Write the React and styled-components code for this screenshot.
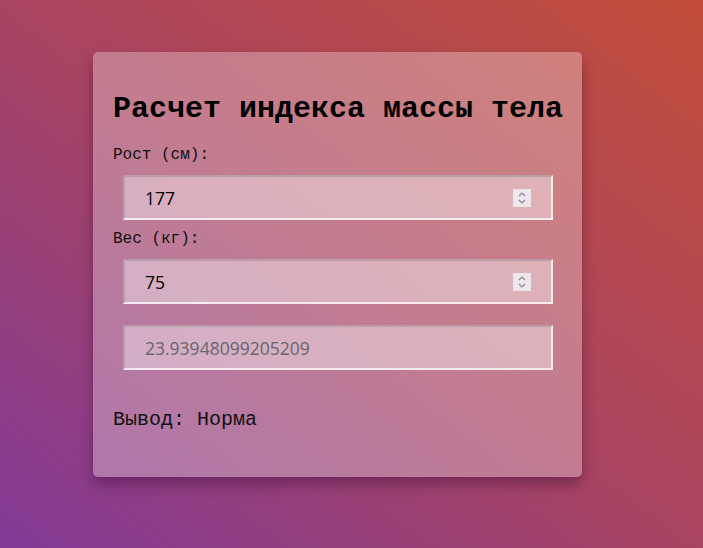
import React, { useState } from "react";
import styled, { createGlobalStyle } from "styled-components";

const GlobalStyle = createGlobalStyle`
  html, body {
    margin: 0;
    padding: 0;
  }
  body {
    font-family: "Liberation Mono", "Courier New", monospace;
  }
`;

const Page = styled.div`
  min-height: 100vh;
  box-sizing: border-box;
  padding: 52px 0 0 93px;
  background: linear-gradient(to top right, #823a97, #a94461 50%, #c24d39);
`;

const Card = styled.div`
  width: 489px;
  box-sizing: border-box;
  padding: 20px 20px 25px;
  border-radius: 5px;
  background: rgba(255, 255, 255, 0.3);
  box-shadow: 0 8px 14px rgba(40, 0, 40, 0.35);
`;

const Title = styled.h1`
  margin: 20px 0 20px;
  font-size: 30px;
  font-weight: bold;
  color: #000;
  line-height: 34px;
  white-space: nowrap;
`;

const Label = styled.label`
  display: block;
  font-size: 16px;
  line-height: 19px;
  color: #111;
`;

const Field = styled.div`
  display: flex;
  align-items: center;
  width: 430px;
  height: 45px;
  box-sizing: border-box;
  margin: ${(p) => p.$margin || "10px"};
  padding: 0 20px 0 20px;
  background: rgba(255, 255, 255, 0.4);
  border: 2px solid;
  border-color: rgba(170, 150, 160, 0.7) rgba(255, 255, 255, 0.75)
    rgba(255, 255, 255, 0.75) rgba(170, 150, 160, 0.7);
`;

const Input = styled.input`
  flex: 1;
  min-width: 0;
  border: none;
  outline: none;
  background: transparent;
  padding: 0;
  font-family: "Open Sans", "Noto Sans", sans-serif;
  font-size: 17.5px;
  color: ${(p) => (p.readOnly ? "#6a656b" : "#000")};
  -moz-appearance: textfield;
  &::-webkit-outer-spin-button,
  &::-webkit-inner-spin-button {
    -webkit-appearance: none;
    margin: 0;
  }
`;

const Spinner = styled.div`
  width: 18px;
  height: 18px;
  display: flex;
  align-items: center;
  justify-content: center;
  background: #ebe7ec;
`;

const Result = styled.p`
  margin: 38px 0 20px;
  font-size: 20px;
  line-height: 24px;
  color: #111;
`;

function SpinIcon() {
  return (
    <svg width="10" height="14" viewBox="0 0 10 14">
      <path
        d="M2 5 L5 2 L8 5 M2 9 L5 12 L8 9"
        fill="none"
        stroke="#8b8790"
        strokeWidth="1.2"
      />
    </svg>
  );
}

function NumberField({ value, onChange }) {
  return (
    <Field>
      <Input type="number" value={value} onChange={(e) => onChange(e.target.value)} />
      <Spinner>
        <SpinIcon />
      </Spinner>
    </Field>
  );
}

export default function App() {
  const [height, setHeight] = useState("177");
  const [weight, setWeight] = useState("75");

  const h = parseFloat(height) / 100;
  const bmi = weight / (h * h);
  let verdict = "Норма";
  if (bmi < 18.5) verdict = "Недостаток веса";
  else if (bmi >= 25) verdict = "Избыточный вес";

  return (
    <>
      <GlobalStyle />
      <Page>
        <Card>
          <Title>Расчет индекса массы тела</Title>
          <Label>Рост (см):</Label>
          <NumberField value={height} onChange={setHeight} />
          <Label>Вес (кг):</Label>
          <NumberField value={weight} onChange={setWeight} />
          <Field $margin="21px 10px 10px">
            <Input readOnly value={String(bmi)} />
          </Field>
          <Result>Вывод: {verdict}</Result>
        </Card>
      </Page>
    </>
  );
}
